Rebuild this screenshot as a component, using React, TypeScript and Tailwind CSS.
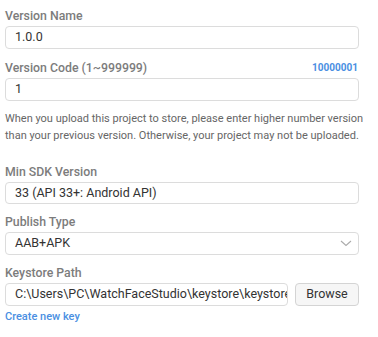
const label = 'block text-[12.3px] leading-4 font-medium text-[#7c7c7c]';
const field =
  'flex items-center h-[23px] px-[9px] border border-[#dcdcdc] rounded-[4px] bg-white text-[12.5px] text-[#333] whitespace-nowrap overflow-hidden';

export default function App() {
  return (
    <div className="w-[378px] h-[337px] bg-white font-['Roboto',sans-serif] pl-[5px] pt-[8px]">
      <div className="w-[354px]">
        <span className={label}>Version Name</span>
        <div className={`${field} mt-[2px]`}>1.0.0</div>

        <div className="flex items-end justify-between mt-[11px]">
          <span className={label}>Version Code (1~999999)</span>
          <span className="text-[10px] leading-4 font-bold text-[#4a8fe2] pr-[1px]">10000001</span>
        </div>
        <div className={`${field} mt-[2px]`}>1</div>

        <p className="mt-[9px] text-[11px] leading-[17px] text-[#666] whitespace-nowrap">
          When you upload this project to store, please enter higher number version
          <br />
          than your previous version. Otherwise, your project may not be uploaded.
        </p>

        <span className={`${label} mt-[20px]`}>Min SDK Version</span>
        <div className={`${field} !h-[22px] mt-[2px]`}>33 (API 33+: Android API)</div>

        <span className={`${label} mt-[10px]`}>Publish Type</span>
        <div className={`${field} mt-[2px] justify-between pr-[5px]`}>
          <span>AAB+APK</span>
          <svg width="12" height="7" viewBox="0 0 12 7" className="mr-[1px]">
            <polyline points="1,1 6,5.5 11,1" fill="none" stroke="#ababab" strokeWidth="1.1" />
          </svg>
        </div>

        <span className={`${label} mt-[10px]`}>Keystore Path</span>
        <div className="flex gap-[7px] mt-[2px]">
          <div className={`${field} flex-1`}>C:\Users\PC\WatchFaceStudio\keystore\keystore.jks</div>
          <button className="w-[64px] h-[23px] border border-[#d4d4d4] rounded-[4px] bg-[#f6f6f6] text-[12.5px] text-[#333]">
            Browse
          </button>
        </div>

        <span className="block mt-[3px] text-[11px] leading-4 font-medium text-[#4a8fe2]">Create new key</span>
      </div>
    </div>
  );
}
